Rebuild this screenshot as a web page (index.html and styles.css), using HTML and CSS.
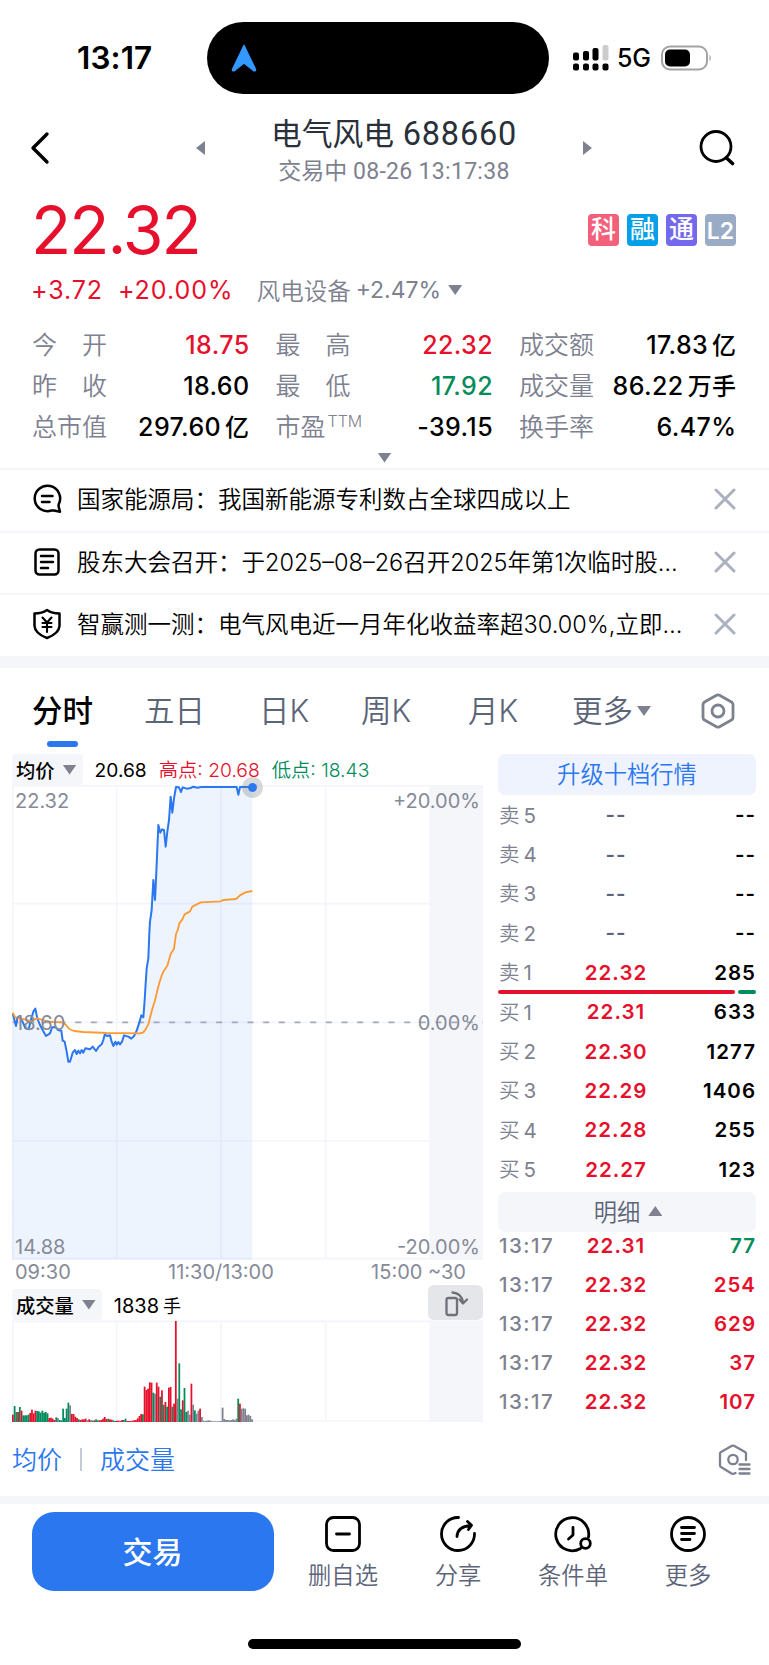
FILE: index.html
```html
<!DOCTYPE html>
<html lang="zh-CN">
<head>
    <meta charset="utf-8">
    <title>电气风电 688660</title>
    <link rel="stylesheet" href="styles.css">
</head>
<body>
    <!-- status bar -->
    <div class="status">
        <div class="clock">13:17</div>
        <div class="island">
            <svg width="26" height="28" viewBox="0 0 26 28"><path d="M13 1.5 L24.5 25.5 Q24.5 27.5 22.5 26.5 L13 19 L3.500 26.5 Q1.500 27.5 1.500 25.500 Z" fill="#3399ff" stroke="#3399ff" stroke-width="1.500" stroke-linejoin="round"/></svg>
        </div>
        <svg class="signal" width="38" height="28" viewBox="0 0 38 28">
            <rect x="1" y="8.500" width="6" height="8" rx="2"/>
            <rect x="11" y="7" width="6" height="9.500" rx="2"/>
            <rect x="20.500" y="4" width="6" height="12.500" rx="2"/>
            <rect x="30.500" y="1" width="6" height="15.500" rx="2" fill="#ccc"/>
            <rect x="1" y="19.500" width="6" height="7" rx="2"/>
            <rect x="11" y="19.500" width="6" height="7" rx="2"/>
            <rect x="20.500" y="19.500" width="6" height="7" rx="2"/>
            <rect x="30.500" y="19.500" width="6" height="7" rx="2"/>
        </svg>
        <div class="net">5G</div>
        <svg class="battery" width="52" height="26" viewBox="0 0 52 26">
            <rect x="1" y="1.500" width="45" height="23" rx="8" fill="none" stroke="#a3a3a3" stroke-width="2"/>
            <rect x="4" y="4.500" width="25" height="17" rx="5"/>
            <path d="M48.500 9.500 Q51 13 48.500 16.500 Z" fill="#999"/>
        </svg>
    </div>

    <!-- title -->
    <div class="header">
        <svg class="back" width="22" height="34" viewBox="0 0 22 34"><path d="M18 3 L4 17 L18 31" fill="none" stroke="#000" stroke-width="3.400" stroke-linecap="round" stroke-linejoin="round"/></svg>
        <i class="tri-left"></i>
        <div class="title">
            <div class="name">电气风电 <span>688660</span></div>
            <div class="time">交易中 <span>08-26 13:17:38</span></div>
        </div>
        <i class="tri-right"></i>
        <svg class="search" width="36" height="36" viewBox="0 0 36 36"><circle cx="17" cy="16.500" r="15" fill="none" stroke="#000" stroke-width="2.800"/><path d="M27.500 28 L33.500 33.500" stroke="#000" stroke-width="3.600" stroke-linecap="round"/></svg>
    </div>

    <!-- quote -->
    <div class="quote">
        <div class="price-row">
            <div class="price">22.32</div>
            <div class="badges">
                <span class="badge b-red">科</span>
                <span class="badge b-cyan">融</span>
                <span class="badge b-purple">通</span>
                <span class="badge b-gray">L2</span>
            </div>
        </div>
        <div class="change-row">
            <span class="chg">+3.72</span>
            <span class="pct">+20.00%</span>
            <span class="industry">风电设备</span>
            <span class="ind-pct">+2.47%</span>
            <i class="tri-down"></i>
        </div>
        <div class="stats">
            <div class="stat"><label class="wide"><b>今</b><b>开</b></label><span class="red">18.75</span></div>
            <div class="stat"><label class="wide"><b>最</b><b>高</b></label><span class="red">22.32</span></div>
            <div class="stat"><label>成交额</label><span>17.83<em>亿</em></span></div>
            <div class="stat"><label class="wide"><b>昨</b><b>收</b></label><span>18.60</span></div>
            <div class="stat"><label class="wide"><b>最</b><b>低</b></label><span class="green">17.92</span></div>
            <div class="stat"><label>成交量</label><span>86.22<em>万手</em></span></div>
            <div class="stat"><label>总市值</label><span>297.60<em>亿</em></span></div>
            <div class="stat"><label>市盈<sup>TTM</sup></label><span>-39.15</span></div>
            <div class="stat"><label>换手率</label><span>6.47%</span></div>
        </div>
        <i class="tri-down expand"></i>
    </div>

    <!-- notices -->
    <div class="notices">
        <div class="notice">
            <svg width="30" height="30" viewBox="0 0 30 30" fill="none" stroke="#000" stroke-width="2.500" stroke-linecap="round" stroke-linejoin="round"><path d="M22 26.500 L28 27.800 L26.600 22.500 V20.500 A12.700 12.700 0 1 0 19.500 26.500 Z"/><path d="M10 12 H20.500 M10 18 H17.500"/></svg>
            <p>国家能源局：我国新能源专利数占全球四成以上</p>
            <svg class="close" width="22" height="22" viewBox="0 0 22 22"><path d="M2 2 L20 20 M20 2 L2 20"/></svg>
        </div>
        <div class="notice">
            <svg width="30" height="30" viewBox="0 0 30 30" fill="none" stroke="#000" stroke-width="2.500" stroke-linecap="round" stroke-linejoin="round"><rect x="3.500" y="2.500" width="23" height="25" rx="4"/><path d="M9 9 H21 M9 15 H21 M9 21 H16"/></svg>
            <p>股东大会召开：于2025–08–26召开2025年第1次临时股…</p>
            <svg class="close" width="22" height="22" viewBox="0 0 22 22"><path d="M2 2 L20 20 M20 2 L2 20"/></svg>
        </div>
        <div class="notice">
            <svg width="30" height="32" viewBox="0 0 30 32" fill="none" stroke="#000" stroke-width="2.500" stroke-linecap="round" stroke-linejoin="round"><path d="M15 2 Q20 5.500 27.500 5.500 L27.500 18 Q27 25.500 15 30 Q3 25.500 2.500 18 L2.500 5.500 Q10 5.500 15 2 Z"/><path d="M10.500 9.500 L15 14.500 L19.500 9.500 M10.500 15 H19.500 M10.500 19 H19.500 M15 15 V24" stroke-width="2.100"/></svg>
            <p>智赢测一测：电气风电近一月年化收益率超30.00%,立即…</p>
            <svg class="close" width="22" height="22" viewBox="0 0 22 22"><path d="M2 2 L20 20 M20 2 L2 20"/></svg>
        </div>
    </div>

    <!-- chart tabs -->
    <div class="tabs">
        <span class="tab active">分时</span>
        <span class="tab">五日</span>
        <span class="tab">日K</span>
        <span class="tab">周K</span>
        <span class="tab">月K</span>
        <span class="tab">更多<i class="tri-down"></i></span>
        <svg width="34" height="36" viewBox="0 0 34 36" fill="none" stroke="#7d8190" stroke-width="2.800" stroke-linejoin="round"><path d="M15.500 2.300 Q17 1.500 18.500 2.300 L30.500 9 Q32 10 32 11.500 V24.500 Q32 26 30.500 27 L18.500 33.700 Q17 34.500 15.500 33.700 L3.500 27 Q2 26 2 24.500 V11.500 Q2 10 3.500 9 Z"/><circle cx="17" cy="18" r="6"/></svg>
    </div>

    <div class="main">
        <div class="charts">
            <div class="legend">
                <span class="pill">均价<i class="tri-down"></i></span>
                <span class="avg">20.68</span>
                <span class="high red">高点: 20.68</span>
                <span class="low green">低点: 18.43</span>
            </div>
            <div class="plot">
                <svg width="471" height="476" viewBox="36 135 1413 1428">
                    <rect x="1288" y="135" width="161" height="1424" fill="#f4f6fa"/>
                    <path d="M38 135 V1559 M350 137 V1556 M663 137 V1556 M977 137 V1556 M36 137 H1449 M36 491 H1290 M36 847 H1290 M36 1203 H1290 M36 1556 H1449" stroke="#f4f5fb" stroke-width="5" fill="none"/>
                    <path id="area" fill="#2b6ff0" fill-opacity="0.080"/>
                    <path d="M36 847 H1449" stroke="#a3aab8" stroke-width="5" stroke-dasharray="18 29" stroke-dashoffset="-1.500"/>
                    <polyline id="line" fill="none" stroke="#2b77f0" stroke-width="6" stroke-linejoin="round"/>
                    <polyline points="38,818 46,832 60,836 75,838 95,844 110,835 122,838 140,844 160,846 188,847 198,855 208,867 222,873 250,876 320,879 420,880 430,877 437,868 446,850 452,825 458,803 466,778 470,760 478,728 486,704 492,692 502,677 512,642 522,626 528,582 534,568 538,550 547,538 554,523 570,514 577,500 602,487 662,484 670,480 708,477 720,466 736,457 757,453" fill="none" stroke="#fc9a35" stroke-width="5.500" stroke-linejoin="round"/>
                </svg>
                <i class="dot"></i>
                <span class="axis tl">22.32</span>
                <span class="axis tr">+20.00%</span>
                <span class="axis ml">18.60</span>
                <span class="axis mr">0.00%</span>
                <span class="axis bl">14.88</span>
                <span class="axis br">-20.00%</span>
            </div>
            <div class="times"><span>09:30</span><span>11:30/13:00</span><span>15:00 ~30</span></div>
            <div class="legend vol-legend">
                <span class="pill">成交量<i class="tri-down"></i></span>
                <span class="avg">1838<em>手</em></span>
                <span class="rotate">
                    <svg width="28" height="28" viewBox="0 0 28 28" fill="none" stroke="#6e7178" stroke-width="2.300" stroke-linejoin="round" stroke-linecap="round"><rect x="4.500" y="9" width="10.500" height="17" rx="2"/><path d="M10.500 3.500 Q19.500 4 21 13.500 M17.500 10.500 L21 14.500 L25 10.500"/></svg>
                </span>
            </div>
            <svg class="volume" width="471" height="102" viewBox="36 150 1413 306">
                <rect x="1288" y="152" width="161" height="304" fill="#f4f6fa"/>
                <path d="M38 152 V455 M350 152 V455 M663 152 V455 M977 152 V455 M36 154 H1449 M36 453 H1449" stroke="#f4f5fb" stroke-width="5" fill="none"/>
                <g id="bars"></g>
            </svg>
        </div>

        <div class="book">
            <div class="upgrade">升级十档行情</div>
            <div class="rows">
                <div class="row"><span>卖<em>5</em></span><b class="dim">--</b><b>--</b></div>
                <div class="row"><span>卖<em>4</em></span><b class="dim">--</b><b>--</b></div>
                <div class="row"><span>卖<em>3</em></span><b class="dim">--</b><b>--</b></div>
                <div class="row"><span>卖<em>2</em></span><b class="dim">--</b><b>--</b></div>
                <div class="row"><span>卖<em>1</em></span><b class="red">22.32</b><b>285</b></div>
                <div class="ratio"><i></i><i></i></div>
                <div class="row"><span>买<em>1</em></span><b class="red">22.31</b><b>633</b></div>
                <div class="row"><span>买<em>2</em></span><b class="red">22.30</b><b>1277</b></div>
                <div class="row"><span>买<em>3</em></span><b class="red">22.29</b><b>1406</b></div>
                <div class="row"><span>买<em>4</em></span><b class="red">22.28</b><b>255</b></div>
                <div class="row"><span>买<em>5</em></span><b class="red">22.27</b><b>123</b></div>
            </div>
            <div class="detail">明细<i class="tri-up"></i></div>
            <div class="ticks">
                <div class="row"><span>13:17</span><b class="red">22.31</b><b class="green">77</b></div>
                <div class="row"><span>13:17</span><b class="red">22.32</b><b class="red">254</b></div>
                <div class="row"><span>13:17</span><b class="red">22.32</b><b class="red">629</b></div>
                <div class="row"><span>13:17</span><b class="red">22.32</b><b class="red">37</b></div>
                <div class="row"><span>13:17</span><b class="red">22.32</b><b class="red">107</b></div>
            </div>
        </div>
    </div>

    <div class="indicators">
        <span>均价</span><i></i><span>成交量</span>
        <svg width="34" height="32" viewBox="0 0 34 32" fill="none" stroke="#7d8190" stroke-width="2.300" stroke-linecap="round" stroke-linejoin="round"><path d="M28 16 V9.500 Q28 8.500 27 8 L16 1.800 Q15 1.300 14 1.800 L3 8 Q2 8.500 2 9.500 V21.500 Q2 22.500 3 23 L13.500 29.500 Q15 30.300 17.500 29"/><circle cx="15" cy="15.500" r="4.700"/><path d="M21.500 20.500 H31.500 M21.500 25 H31.500 M21.500 29.500 H31.500"/></svg>
    </div>

    <!-- bottom bar -->
    <div class="toolbar">
        <div class="trade">交易</div>
        <div class="tool">
            <svg width="38" height="38" viewBox="0 0 38 38"><rect x="2.500" y="2.500" width="33" height="33" rx="7"/><path d="M12.500 19 H25.500"/></svg>
            <span>删自选</span>
        </div>
        <div class="tool">
            <svg width="38" height="38" viewBox="0 0 38 38"><path d="M19.500 2.500 A16.500 16.500 0 1 0 35.500 18.500"/><path d="M18 21.500 Q18.500 11.500 31.500 10.500 M28.500 6.500 L32.500 10.300 L29.500 14.500"/></svg>
            <span>分享</span>
        </div>
        <div class="tool">
            <svg width="38" height="38" viewBox="0 0 38 38"><path d="M26.500 33.500 A16.500 16.500 0 1 1 34.500 22"/><path d="M19 12.500 V20 L14.500 24"/><circle cx="31.500" cy="28.500" r="4.800"/></svg>
            <span>条件单</span>
        </div>
        <div class="tool">
            <svg width="38" height="38" viewBox="0 0 38 38"><circle cx="19" cy="19" r="16.500"/><path d="M12.500 12.500 H25.500 M12.500 18.500 H25.500 M12.500 24.500 H21"/></svg>
            <span>更多</span>
        </div>
    </div>
    <div class="home"></div>

    <script>
        // price line, ends on the upper limit
        const points = '38,820 48,858 52,835 60,828 70,850 76,864 86,868 94,835 100,815 106,806 112,835 120,855 128,870 138,888 150,880 156,862 168,862 174,870 184,872 188,902 194,905 200,935 205,965 210,965 218,938 225,930 230,942 235,932 240,940 245,930 250,938 256,925 270,928 278,920 288,933 296,920 305,913 310,900 314,884 322,888 330,886 335,905 340,918 346,905 350,914 355,906 360,913 366,905 372,886 385,890 394,896 402,888 410,872 418,848 424,826 430,832 434,780 437,730 440,685 445,655 448,580 450,545 455,510 460,420 465,480 467,440 471,350 475,255 481,278 486,268 492,270 497,320 502,275 507,240 512,170 517,218 522,175 528,141 537,142 543,156 548,142 560,146 572,144 580,140 592,143 604,141 710,141 715,164 720,141 757,141';
        document.getElementById('line').setAttribute('points', points);
        document.getElementById('area').setAttribute('d', 'M' + points + ' 757,1559 36,1559Z');

        // volume per minute: r = up, g = down, n = flat
        const volume = 'r22 g48 g30 r30 g45 r34 g20 g20 g20 g22 r27 r37 r26 r34 g33 g32 g28 g34 g28 g30 g26 r12 r13 r10 r6 g14 n12 g6 g5 g40 g12 g40 g58 n50 r24 r24 r16 r12 g8 r6 r8 r8 r10 n5 r8 n6 g4 r5 g8 g5 r5 r6 r10 r15 r9 g10 r8 r7 g5 g3 r4 r4 r3 r6 g6 g10 r3 r3 r3 r4 r5 r6 r11 r18 r24 g23 r106 r96 r100 r119 r118 g88 n85 r118 r106 g76 r95 g52 r60 g46 r103 r105 g46 r55 r303 n70 g176 g38 r65 g102 g30 n34 n22 r115 n52 g35 n25 n34 r40 n15 n4 n3 n4 n5 n4 n2 n2 n2 n2 n2 n3 n43 n9 n6 n6 n5 n6 n8 n6 n10 g70 r55 n40 n41 n40 n20 n22 n18 n8'.split(' ');
        const colors = {r: '#e6102c', g: '#038c5b', n: '#7d8190'};
        let bars = '';
        volume.forEach((item, index) => {
            const height = Number(item.slice(1));
            bars += `<rect x="${36 + index * 5.2}" y="${456 - height}" width="5.300" height="${height}" fill="${colors[item[0]]}"/>`;
        });
        document.getElementById('bars').innerHTML = bars;
    </script>
</body>
</html>
```
FILE: styles.css
```css
* {
    box-sizing: border-box;
}

body {
    margin: 0;
    width: 769px;
    height: 1665px;
    overflow: hidden;
    background-color: #fff;
    color: #000;
    font-family: Inter, "Noto Sans CJK SC", sans-serif;
}

svg {
    display: block;
    flex: none;
}

em, i {
    font-style: normal;
}

.red { color: #e6102c; }
.green { color: #038c5b; }

/* small arrows */
.tri-down, .tri-up, .tri-left, .tri-right {
    flex: none;
    background-color: #7d8190;
}

.tri-down {
    width: 14px;
    height: 10px;
    clip-path: polygon(0 0, 100% 0, 50% 100%);
}

.tri-up {
    width: 14px;
    height: 10px;
    clip-path: polygon(50% 0, 100% 100%, 0 100%);
}

.tri-left {
    width: 9px;
    height: 14px;
    clip-path: polygon(100% 0, 100% 100%, 0 50%);
}

.tri-right {
    width: 9px;
    height: 14px;
    clip-path: polygon(0 0, 100% 50%, 0 100%);
}

/* status bar */
.status {
    display: flex;
    align-items: center;
    height: 115px;
}

.clock {
    width: 207px;
    padding-left: 77px;
    font-size: 31.5px;
    font-weight: 600;
    letter-spacing: 0.1px;
}

.island {
    display: flex;
    align-items: center;
    width: 342px;
    height: 72px;
    padding-left: 24px;
    border-radius: 36px;
    background-color: #000;
}

.signal {
    margin-left: 23px;
}

.net {
    width: 43px;
    padding-left: 7px;
    font-size: 25px;
    font-weight: 500;
    letter-spacing: -0.2px;
}

.battery {
    margin-left: 8px;
}

/* title */
.header {
    display: flex;
    align-items: center;
    height: 66px;
    margin-bottom: 9px;
    padding: 0 34px 0 29px;
}

.tri-left {
    margin-left: 145px;
}

.title {
    width: 376px;
    margin: 9px auto 0;
    text-align: center;
    font-family: Roboto, "Noto Sans CJK SC", sans-serif;
}

.name {
    line-height: 38px;
    font-size: 30.8px;
    font-weight: 400;
    color: #29303a;
}

.name span {
    margin-left: 1px;
    font-size: 32.5px;
    letter-spacing: 0.8px;
}

.time {
    line-height: 36px;
    font-size: 23px;
    color: #7d8190;
}

.time span {
    letter-spacing: 0.3px;
}

.search {
    margin-left: 107px;
}

/* quote */
.quote {
    height: 278px;
    padding: 0 33px 0 31px;
}

.price-row {
    display: flex;
    justify-content: space-between;
    height: 80px;
}

.price {
    line-height: 80px;
    font-size: 66px;
    letter-spacing: -2px;
    color: #e6102c;
}

.badges {
    display: flex;
    gap: 8px;
    padding-top: 24px;
}

.badge {
    width: 31px;
    height: 32px;
    border-radius: 4px;
    line-height: 31px;
    text-align: center;
    font-size: 25px;
    font-weight: 500;
    color: #fff;
}

.b-red { background-color: #f2607a; }
.b-cyan { background-color: #06a0e8; }
.b-purple { background-color: #7468ec; }
.b-gray {
    background-color: #9aabc6;
    line-height: 34px;
    font-size: 23px;
    font-weight: 600;
}

.change-row {
    display: flex;
    align-items: center;
    height: 40px;
    font-size: 25px;
    letter-spacing: 0.9px;
    color: #e6102c;
}

.pct {
    margin-left: 15px;
    letter-spacing: 1px;
}

.industry {
    margin-left: 23px;
    font-size: 23.5px;
    font-weight: 350;
    letter-spacing: 0;
    color: #7d8190;
}

.ind-pct {
    margin-left: 5px;
    font-size: 23px;
    letter-spacing: 0;
    color: #7d8190;
}

.change-row .tri-down {
    margin-left: 7px;
}

.stats {
    display: grid;
    grid-template-columns: 217.5px 217.5px 217.5px;
    column-gap: 26px;
    grid-auto-rows: 41px;
    padding: 14.5px 0 0 1px;
}

.stat {
    display: flex;
    justify-content: space-between;
    align-items: center;
    line-height: 41px;
    font-size: 25px;
    font-weight: 500;
    letter-spacing: 0.4px;
    white-space: nowrap;
}

.stat label {
    font-weight: 350;
    letter-spacing: 0;
    color: #7d8190;
}

.stat b {
    font-weight: 350;
}

.wide {
    display: flex;
    justify-content: space-between;
    width: 75px;
}

.stat em {
    margin-left: 4px;
    font-size: 24px;
}

.stat sup {
    margin-left: 2px;
    font-size: 16px;
    font-weight: 300;
    line-height: 0;
    vertical-align: 9px;
}

.expand {
    display: block;
    margin: 5px auto 0;
    transform: translateX(1px);
}

/* notices */
.notices {
    height: 188px;
}

.notice {
    display: flex;
    align-items: center;
    height: 62.6px;
    padding: 0 33px 2px 32px;
    border-top: 2px solid #f4f5fa;
}

.notice p {
    flex: 1;
    margin: -2px 0 0 15px;
    font-size: 23.5px;
    font-weight: 350;
    white-space: nowrap;
}

.close {
    stroke: #abb1bf;
    stroke-width: 3;
    stroke-linecap: round;
}

/* chart tabs */
.tabs {
    display: grid;
    grid-template-columns: 112px 115px 102px 107px 104px 1fr 34px;
    align-items: start;
    justify-items: start;
    height: 98px;
    padding: 0 34px 0 32px;
    border-top: 12px solid #f4f6fa;
    line-height: 86px;
    font-size: 30.5px;
    font-weight: 350;
    color: #5c6478;
}

.tab {
    display: flex;
    align-items: center;
    gap: 4px;
    height: 86px;
}

.active {
    flex-direction: column;
    gap: 0;
    font-weight: 500;
    color: #000;
}

.active::after {
    content: "";
    flex: none;
    width: 31px;
    height: 6px;
    margin-top: -13px;
    border-radius: 3px;
    background-color: #2b77f0;
}

.tabs svg {
    margin-top: 25px;
}

/* charts and order book */
.main {
    display: grid;
    grid-template-columns: 471px 258px;
    column-gap: 15px;
    height: 676px;
    padding-left: 12px;
}

.legend {
    display: flex;
    align-items: center;
    height: 31px;
    font-size: 19.2px;
    white-space: nowrap;
}

.pill {
    display: flex;
    align-items: center;
    gap: 8px;
    height: 31px;
    padding: 0 6px 0 4px;
    border-radius: 4px;
    background-color: #f4f6fa;
    font-size: 19.3px;
    font-weight: 500;
}

.avg {
    margin-left: 12px;
}

.vol-legend .avg {
    font-size: 20px;
}

.avg em {
    margin-left: 4px;
    font-size: 18px;
}

.high, .low {
    margin: -2px 0 0 12px;
    font-size: 19.3px;
    font-weight: 350;
}

.plot {
    position: relative;
    height: 476px;
}

.dot {
    position: absolute;
    left: 230px;
    top: -8.5px;
    width: 21px;
    height: 21px;
    border-radius: 50%;
    border: 6px solid rgba(120, 125, 130, 0.3);
    background-color: #2b77f0;
    background-clip: padding-box;
}

/* axis texts lie over the plot */
.axis {
    position: absolute;
    line-height: 24px;
    font-size: 20px;
    color: #868a98;
}

.tl { left: 3px; top: 4px; }
.tr { right: 3px; top: 4px; }
.ml { left: 3px; top: 226px; }
.mr { right: 3px; top: 226px; }
.bl { left: 3px; bottom: 2px; }
.br { right: 3px; bottom: 2px; }

.times {
    display: flex;
    justify-content: space-between;
    height: 28px;
    padding: 0 17px 0 3px;
    line-height: 22px;
    font-size: 20px;
    color: #868a98;
}

.rotate {
    display: flex;
    align-items: center;
    justify-content: center;
    width: 55px;
    height: 35px;
    margin: -4px 0 0 auto;
    border-radius: 6px;
    background-color: #e5e6ea;
}

.upgrade, .detail {
    display: flex;
    align-items: center;
    justify-content: center;
    height: 41px;
    border-radius: 7px;
    font-size: 23.3px;
    font-weight: 350;
}

.upgrade {
    padding-bottom: 3px;
    background-color: #eef3fe;
    color: #2b77f0;
}

.detail {
    gap: 8px;
    height: 40px;
    padding: 0 0 2px 2px;
    background-color: #f4f6fa;
    color: #5c6478;
}

.rows {
    height: 397px;
}

.row {
    display: grid;
    grid-template-columns: 71px 94px 1fr;
    align-items: center;
    height: 39.4px;
    font-size: 20.5px;
    color: #7d8190;
}

.row span {
    margin-top: -2px;
    padding-left: 1px;
    font-weight: 350;
}

.row em {
    margin-left: 4px;
    font-weight: 400;
}

.row b {
    font-weight: 600;
    letter-spacing: 1px;
    text-align: center;
}

.row b:last-child {
    text-align: right;
}

.row b:not([class]) {
    color: #000;
}

.row .red {
    color: #e6102c;
}

.row .green {
    color: #038c5b;
}

.row .dim {
    color: #5c6478;
}

.ratio {
    display: flex;
    gap: 3px;
    height: 4px;
    margin: -2px 0;
}

.ratio i {
    width: 237px;
    border-radius: 2px;
    background-color: #e6102c;
}

.ratio i:last-child {
    width: 18px;
    background-color: #038c5b;
}

.ticks {
    margin-top: -6px;
}

.ticks .row {
    height: 39px;
}

.ticks .row span {
    margin-top: 0;
    padding-left: 1px;
    font-weight: 500;
    letter-spacing: 1.5px;
}

/* selected indicators */
.indicators {
    display: flex;
    align-items: center;
    height: 66px;
    padding: 0 17px 6px 12px;
    font-size: 25px;
    font-weight: 350;
    color: #2b77f0;
}

.indicators span {
    margin-top: -5px;
}

.indicators i {
    width: 2px;
    height: 23px;
    margin: -2px 18px 0;
    background-color: #c5cad5;
}

.indicators svg {
    margin-left: auto;
}

/* bottom bar */
.toolbar {
    display: flex;
    height: 143px;
    padding: 8px 22px 0 31.5px;
    border-top: 8px solid #f4f6fa;
}

.trade {
    width: 242px;
    height: 79px;
    margin-right: 12px;
    border-radius: 22px;
    background-color: #2b77f0;
    line-height: 80px;
    text-align: center;
    font-size: 30px;
    font-weight: 500;
    color: #fff;
}

.tool {
    display: flex;
    flex-direction: column;
    align-items: center;
    width: 115px;
    padding-top: 3px;
    font-size: 23.3px;
    font-weight: 350;
    color: #5c6478;
}

.tool svg {
    fill: none;
    stroke: #000;
    stroke-width: 2.8;
    stroke-linecap: round;
    stroke-linejoin: round;
}

.tool span {
    margin-top: 7px;
    line-height: 32px;
}

.home {
    width: 273px;
    height: 10px;
    margin: 0 auto;
    border-radius: 5px;
    background-color: #000;
}
```
